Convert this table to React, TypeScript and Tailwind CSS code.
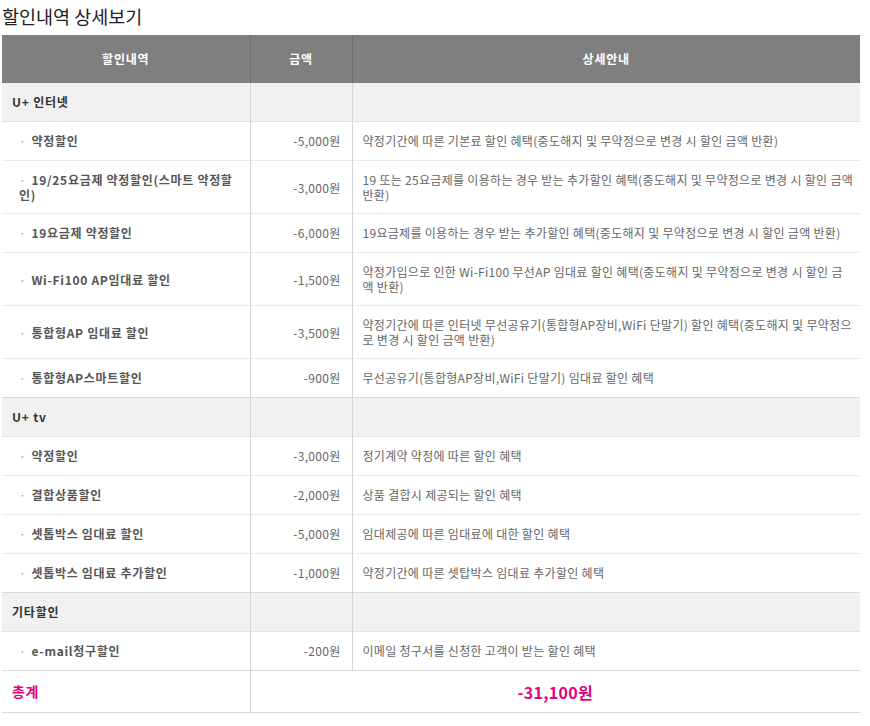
import React from "react";

type Item = { name: React.ReactNode; amount: string; desc: React.ReactNode; tall?: boolean };
type Group = { title: string; items: Item[] };

const groups: Group[] = [
  {
    title: "U+ 인터넷",
    items: [
      { name: "약정할인", amount: "-5,000원", desc: "약정기간에 따른 기본료 할인 혜택(중도해지 및 무약정으로 변경 시 할인 금액 반환)" },
      {
        name: (
          <>
            19/25요금제 약정할인(스마트 약정할
            <br />
            인)
          </>
        ),
        amount: "-3,000원",
        desc: (
          <>
            19 또는 25요금제를 이용하는 경우 받는 추가할인 혜택(중도해지 및 무약정으로 변경 시 할인 금액
            <br />
            반환)
          </>
        ),
        tall: true,
      },
      { name: "19요금제 약정할인", amount: "-6,000원", desc: "19요금제를 이용하는 경우 받는 추가할인 혜택(중도해지 및 무약정으로 변경 시 할인 금액 반환)" },
      {
        name: "Wi-Fi100 AP임대료 할인",
        amount: "-1,500원",
        desc: (
          <>
            약정가입으로 인한 Wi-Fi100 무선AP 임대료 할인 혜택(중도해지 및 무약정으로 변경 시 할인 금
            <br />액 반환)
          </>
        ),
        tall: true,
      },
      {
        name: "통합형AP 임대료 할인",
        amount: "-3,500원",
        desc: (
          <>
            약정기간에 따른 인터넷 무선공유기(통합형AP장비,WiFi 단말기) 할인 혜택(중도해지 및 무약정으
            <br />로 변경 시 할인 금액 반환)
          </>
        ),
        tall: true,
      },
      { name: "통합형AP스마트할인", amount: "-900원", desc: "무선공유기(통합형AP장비,WiFi 단말기) 임대료 할인 혜택" },
    ],
  },
  {
    title: "U+ tv",
    items: [
      { name: "약정할인", amount: "-3,000원", desc: "정기계약 약정에 따른 할인 혜택" },
      { name: "결합상품할인", amount: "-2,000원", desc: "상품 결합시 제공되는 할인 혜택" },
      { name: "셋톱박스 임대료 할인", amount: "-5,000원", desc: "임대제공에 따른 임대료에 대한 할인 혜택" },
      { name: "셋톱박스 임대료 추가할인", amount: "-1,000원", desc: "약정기간에 따른 셋탑박스 임대료 추가할인 혜택" },
    ],
  },
  {
    title: "기타할인",
    items: [{ name: "e-mail청구할인", amount: "-200원", desc: "이메일 청구서를 신청한 고객이 받는 할인 혜택" }],
  },
];

const font = { fontFamily: '"Noto Sans CJK KR", "Noto Sans", sans-serif' };

export default function App() {
  return (
    <div className="bg-white w-[870px] h-[726px]" style={font}>
      <div className="pl-[2px] pt-[1px] h-[35px] text-[18.5px] leading-[30px] text-[#222]">
        할인내역 상세보기
      </div>
      <table className="ml-[2px] w-[858px] table-fixed border-collapse text-[12px] tracking-[0.3px]">
        <colgroup>
          <col className="w-[248px]" />
          <col className="w-[102px]" />
          <col className="w-[508px]" />
        </colgroup>
        <thead>
          <tr className="bg-[#7f7f7f] h-[48px] text-white font-bold tracking-[0.8px]">
            <th className="border-r border-[#707070] font-bold">할인내역</th>
            <th className="border-r border-[#707070] font-bold">금액</th>
            <th className="font-bold">상세안내</th>
          </tr>
        </thead>
        <tbody>
          {groups.map((g) => (
            <React.Fragment key={g.title}>
              <tr className="bg-[#f1f1f1] border-b border-[#e2e2e2] leading-[14px]">
                <td className="py-[12px] pl-[10px] font-bold tracking-[0.8px] text-[#333] border-r border-[#d6d6d6]">
                  {g.title}
                </td>
                <td className="border-r border-[#d6d6d6]"></td>
                <td></td>
              </tr>
              {g.items.map((it, i) => {
                const pad = it.tall ? "py-[11px]" : "py-[12px]";
                return (
                  <tr
                    key={i}
                    className={`border-b ${it.tall ? "leading-[15px]" : "leading-[14px]"} ${
                      i === g.items.length - 1 ? "border-[#d9d9d9]" : "border-[#ebebeb]"
                    }`}
                  >
                    <td
                      className={`${pad} pl-[17px] pr-[8px] font-bold tracking-[0.7px] text-[#555] border-r border-[#d6d6d6] whitespace-nowrap`}
                    >
                      <span className="mr-[5px] text-[#999] font-normal">·</span>
                      {it.name}
                    </td>
                    <td
                      className={`${pad} pr-[11px] text-right text-[#666] border-r border-[#d6d6d6] whitespace-nowrap`}
                    >
                      {it.amount}
                    </td>
                    <td className={`${pad} pl-[10px] pr-[4px] text-[#666] whitespace-nowrap`}>{it.desc}</td>
                  </tr>
                );
              })}
            </React.Fragment>
          ))}
          <tr className="border-b border-[#d9d9d9] h-[42px]">
            <td className="pl-[10px] font-bold text-[14px] tracking-[0.5px] text-[#e4007f] border-r border-[#d6d6d6]">
              총계
            </td>
            <td colSpan={2} className="text-center font-bold text-[16px] tracking-[0.3px] text-[#e4007f]">
              -31,100원
            </td>
          </tr>
        </tbody>
      </table>
    </div>
  );
}
